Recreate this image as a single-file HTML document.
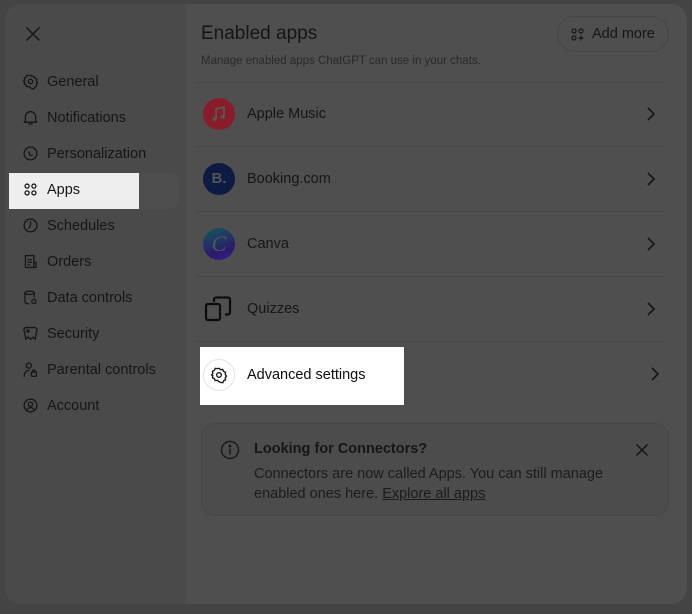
<!DOCTYPE html>
<html><head><style>
*{margin:0;padding:0;box-sizing:border-box}
body{width:692px;height:614px;background:#444;font-family:"Liberation Sans",sans-serif;position:relative;overflow:hidden;color:#161616}
.modal{position:absolute;left:5px;top:4px;width:682px;height:600px;border-radius:16px;background:#4f4f4f;overflow:hidden}
.side{position:absolute;left:0;top:0;width:181px;height:100%;background:#4a4a4a}
.nav{position:absolute;left:22px;font-size:14.5px;display:flex;align-items:center;gap:8px}
.nav svg{width:17px;height:17px;fill:none;stroke:#161616;stroke-width:1.5;stroke-linecap:round;stroke-linejoin:round}
.abs{position:absolute}
.row{position:absolute;left:196px;width:468px;height:65px;border-bottom:1px solid #474747}
.row .ic{position:absolute;left:0;top:16px;width:32px;height:32px;border-radius:50%}
.row .t{position:absolute;left:51px;top:24px;font-size:14.5px}
.chev{position:absolute;right:8px;top:25px;width:10px;height:14px;fill:none;stroke:#161616;stroke-width:1.6}
</style></head><body>
<div class="modal">
<div class="side"></div>
</div>
<svg class="abs" style="left:26px;top:27px" width="14" height="14" viewBox="0 0 14 14" fill="none" stroke="#161616" stroke-width="1.5" stroke-linecap="round"><path d="M1 1L13 13M13 1L1 13"/></svg>

<div class="abs" style="left:9px;top:173px;width:130px;height:36px;background:#eeeeee"></div>
<div class="abs" style="left:139px;top:173px;width:40px;height:36px;background:#4e4e4e;border-radius:0 10px 10px 0"></div>

<div class="nav" style="top:73px"><svg viewBox="0 0 20 20"><circle cx="10" cy="10" r="2.6"/><path d="M10 2.5l1.8 1.6 2.4-.3.9 2.2 2.2 1-.4 2.4 1.5 1.8-1.5 1.8.4 2.4-2.2 1-.9 2.2-2.4-.3L10 17.5l-1.8-1.6-2.4.3-.9-2.2-2.2-1 .4-2.4L1.6 10l1.5-1.8-.4-2.4 2.2-1 .9-2.2 2.4.3z"/></svg>General</div>
<div class="nav" style="top:109px"><svg viewBox="0 0 20 20"><path d="M4 14V9a6 6 0 0112 0v5l1.5 1.5h-15zM8 17.5h4"/></svg>Notifications</div>
<div class="nav" style="top:145px"><svg viewBox="0 0 20 20"><circle cx="10" cy="10" r="7.5"/><path d="M8 8l1 4h3"/></svg>Personalization</div>
<div class="nav" style="top:181px"><svg viewBox="0 0 20 20"><circle cx="6" cy="6" r="2.4"/><circle cx="14" cy="6" r="2.4"/><circle cx="6" cy="14" r="2.4"/><circle cx="14" cy="14" r="2.4"/></svg>Apps</div>
<div class="nav" style="top:217px"><svg viewBox="0 0 20 20"><circle cx="10" cy="10" r="7.5"/><path d="M10 5.5V10l-2 3"/></svg>Schedules</div>
<div class="nav" style="top:253px"><svg viewBox="0 0 20 20"><path d="M4 3h10v14H4zM7 8h4M7 11h4M7 14h2M14 11h2.5v6H14"/></svg>Orders</div>
<div class="nav" style="top:289px"><svg viewBox="0 0 20 20"><ellipse cx="9" cy="4.5" rx="5.5" ry="2"/><path d="M3.5 4.5v11c0 1 2 2 4.5 2M14.5 4.5v5"/><circle cx="14" cy="14.5" r="2.5"/></svg>Data controls</div>
<div class="nav" style="top:325px"><svg viewBox="0 0 20 20"><path d="M5 3a3 3 0 00-2 5l1.5 9 2.5-3 3 3 3-3 2.5 3L17 8a3 3 0 00-2-5z"/><circle cx="7" cy="7" r="1.3"/></svg>Security</div>
<div class="nav" style="top:361px"><svg viewBox="0 0 20 20"><circle cx="8" cy="5.5" r="3"/><path d="M2.5 18c0-4 2.5-7 5.5-7"/><rect x="11" y="13" width="6" height="5" rx="1"/><path d="M12.5 13v-1a1.5 1.5 0 013 0v1"/></svg>Parental controls</div>
<div class="nav" style="top:397px"><svg viewBox="0 0 20 20"><circle cx="10" cy="10" r="7.5"/><circle cx="10" cy="8.5" r="2.5"/><path d="M5.5 15.5c1-2 2.5-3 4.5-3s3.5 1 4.5 3"/></svg>Account</div>

<div class="abs" style="left:201px;top:23px;font-size:19px">Enabled apps</div>
<div class="abs" style="left:201px;top:55px;font-size:11.5px;color:#2a2a2a">Manage enabled apps ChatGPT can use in your chats.</div>
<div class="abs" style="left:557px;top:16px;width:112px;height:36px;border:1px solid #464646;border-radius:18px"></div>
<svg class="abs" style="left:571px;top:28px" width="13" height="13" viewBox="0 0 13 13" fill="none" stroke="#161616" stroke-width="1.2"><circle cx="3" cy="3" r="2"/><circle cx="10" cy="3" r="2"/><circle cx="3" cy="10" r="2"/><path d="M10 7.5v5M7.5 10h5"/></svg>
<div class="abs" style="left:592px;top:26px;font-size:14.5px">Add more</div>
<div class="abs" style="left:196px;top:82px;width:468px;border-top:1px solid #474747"></div>

<div class="row" style="top:82px"><div class="ic" style="left:7px;background:#8a1c2a"><svg width="32" height="32" viewBox="0 0 32 32"><path d="M13 21V11l8-2v10" fill="none" stroke="#555" stroke-width="2"/><circle cx="11.5" cy="21" r="2" fill="#555"/><circle cx="19.5" cy="19" r="2" fill="#555"/></svg></div><div class="t">Apple Music</div><svg class="chev" viewBox="0 0 10 14"><path d="M2 1l6 6-6 6"/></svg></div>
<div class="row" style="top:147px"><div class="ic" style="left:7px;background:#0c1a44;color:#555;font-weight:bold;font-size:15px;text-align:center;line-height:32px">B.</div><div class="t">Booking.com</div><svg class="chev" viewBox="0 0 10 14"><path d="M2 1l6 6-6 6"/></svg></div>
<div class="row" style="top:212px"><div class="ic" style="left:7px;background:linear-gradient(160deg,#0f5c5a,#2c1a6a 70%,#3a1aa0);color:#555;font-family:'Liberation Serif',serif;font-style:italic;font-size:22px;text-align:center;line-height:32px">C</div><div class="t">Canva</div><svg class="chev" viewBox="0 0 10 14"><path d="M2 1l6 6-6 6"/></svg></div>
<div class="row" style="top:277px"><div class="ic" style="left:7px"><svg width="32" height="32" viewBox="0 0 32 32" fill="none" stroke="#0d0d0d" stroke-width="2.2" stroke-linejoin="round"><rect x="3" y="11" width="14" height="16" rx="2"/><path d="M11 9V6.5a2 2 0 012-2h12a2 2 0 012 2v13a2 2 0 01-2 2h-3"/></svg></div><div class="t">Quizzes</div><svg class="chev" viewBox="0 0 10 14"><path d="M2 1l6 6-6 6"/></svg></div>

<div class="abs" style="left:200px;top:347px;width:204px;height:58px;background:#fff"></div>
<div class="abs" style="left:203px;top:359px;width:32px;height:32px;border-radius:50%;border:1px solid #e3e3e3"></div>
<svg class="abs" style="left:210px;top:366px" width="18" height="18" viewBox="0 0 20 20" fill="none" stroke="#161616" stroke-width="1.5" stroke-linejoin="round"><circle cx="10" cy="10" r="2.6"/><path d="M10 2.5l1.8 1.6 2.4-.3.9 2.2 2.2 1-.4 2.4 1.5 1.8-1.5 1.8.4 2.4-2.2 1-.9 2.2-2.4-.3L10 17.5l-1.8-1.6-2.4.3-.9-2.2-2.2-1 .4-2.4L1.6 10l1.5-1.8-.4-2.4 2.2-1 .9-2.2 2.4.3z"/></svg>
<div class="abs" style="left:247px;top:367px;font-size:14.5px;color:#0d0d0d">Advanced settings</div>
<svg class="abs" style="left:650px;top:367px" width="10" height="14" viewBox="0 0 10 14" fill="none" stroke="#161616" stroke-width="1.6"><path d="M2 1l6 6-6 6"/></svg>

<div class="abs" style="left:201px;top:423px;width:468px;height:93px;border:1px solid #474747;border-radius:14px;background:#4c4c4c"></div>
<svg class="abs" style="left:220px;top:440px" width="20" height="20" viewBox="0 0 20 20" fill="none" stroke="#1a1a1a" stroke-width="1.5" stroke-linecap="round"><circle cx="10" cy="10" r="8.5"/><path d="M10 9v5"/><circle cx="10" cy="6" r=".6" fill="#1a1a1a"/></svg>
<div class="abs" style="left:254px;top:441px;font-size:14.5px;font-weight:bold">Looking for Connectors?</div>
<div class="abs" style="left:254px;top:464px;font-size:14.5px;line-height:20px;color:#1c1c1c">Connectors are now called Apps. You can still manage<br>enabled ones here. <span style="text-decoration:underline">Explore all apps</span></div>
<svg class="abs" style="left:636px;top:444px" width="12" height="12" viewBox="0 0 12 12" fill="none" stroke="#161616" stroke-width="1.5" stroke-linecap="round"><path d="M1 1L11 11M11 1L1 11"/></svg>
</body></html>
